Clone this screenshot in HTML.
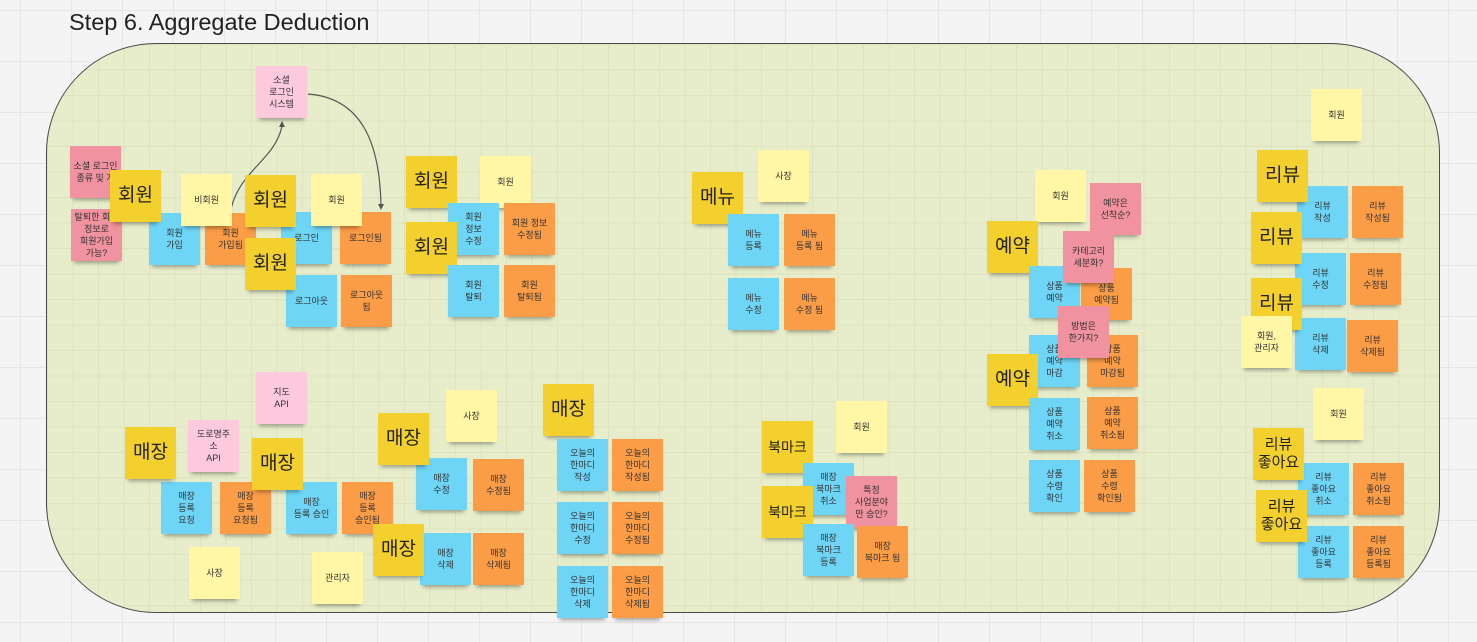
<!DOCTYPE html>
<html><head><meta charset="utf-8"><style>
body{margin:0;width:1477px;height:642px;overflow:hidden;background:#f4f4f4;
background-image:linear-gradient(#e6e6e6 1px,transparent 1px),linear-gradient(90deg,#e6e6e6 1px,transparent 1px);background-size:51px 51px;background-position:20px 10px;
font-family:"Liberation Sans","Noto Sans CJK KR",sans-serif;position:relative}
.t{position:absolute;left:69px;top:9px;font-size:23.5px;color:#222}
.c{position:absolute;left:46px;top:43px;width:1392px;height:568px;border:1.5px solid #4a4a4a;border-radius:110px;background:#e7edcb;
background-image:linear-gradient(#dce3bd 1px,transparent 1px),linear-gradient(90deg,#dce3bd 1px,transparent 1px);background-size:25.5px 25.5px}
.n{position:absolute;width:51px;height:52px;display:flex;align-items:center;justify-content:center;text-align:center;font-size:9px;line-height:12px;color:#333;box-shadow:0 5px 4px -3px rgba(0,0,0,.35);overflow:hidden}
.b{background:#6fd5f6}.o{background:#fb9c46}.y{background:#fff6a6}.p{background:#fdc9dd}.r{background:#f0929f}
.Y{background:#f4d02e;font-size:19px;line-height:22px;color:#222}
.Y.s{font-size:15px;line-height:18px}
svg{position:absolute;left:0;top:0}
</style></head><body>
<div class="t">Step 6. Aggregate Deduction</div>
<div class="c"></div>
<svg width="1477" height="642"><g fill="none" stroke="#555" stroke-width="1.2"><path d="M231 209 C240 170,275 160,282 126"/><path d="M308 94 C360 98,380 140,381 207"/></g><path d="M279 127 L282 121 L285 127Z M378 204 L381 210 L384 204Z" fill="#555"/></svg>

<div class="n r" style="left:70px;top:146px">소셜 로그인<br>종류 및 개</div>
<div class="n r" style="left:71px;top:209px">탈퇴한 회원<br>정보로<br>회원가입<br>가능?</div>
<div class="n b" style="left:149px;top:213px">회원<br>가입</div>
<div class="n o" style="left:205px;top:213px">회원<br>가입됨</div>
<div class="n Y" style="left:110px;top:170px">회원</div>
<div class="n y" style="left:181px;top:174px">비회원</div>
<div class="n p" style="left:256px;top:66px">소셜<br>로그인<br>시스템</div>
<div class="n b" style="left:281px;top:212px">로그인</div>
<div class="n o" style="left:340px;top:212px">로그인됨</div>
<div class="n Y" style="left:245px;top:175px">회원</div>
<div class="n y" style="left:311px;top:174px">회원</div>
<div class="n b" style="left:286px;top:275px">로그아웃</div>
<div class="n o" style="left:341px;top:275px">로그아웃<br>됨</div>
<div class="n Y" style="left:245px;top:238px">회원</div>

<div class="n Y" style="left:406px;top:156px">회원</div>
<div class="n y" style="left:480px;top:156px">회원</div>
<div class="n b" style="left:448px;top:203px">회원<br>정보<br>수정</div>
<div class="n o" style="left:504px;top:203px">회원 정보<br>수정됨</div>
<div class="n Y" style="left:406px;top:222px">회원</div>
<div class="n b" style="left:448px;top:265px">회원<br>탈퇴</div>
<div class="n o" style="left:504px;top:265px">회원<br>탈퇴됨</div>

<div class="n Y" style="left:692px;top:172px">메뉴</div>
<div class="n y" style="left:758px;top:150px">사장</div>
<div class="n b" style="left:728px;top:214px">메뉴<br>등록</div>
<div class="n o" style="left:784px;top:214px">메뉴<br>등록 됨</div>
<div class="n b" style="left:728px;top:278px">메뉴<br>수정</div>
<div class="n o" style="left:784px;top:278px">메뉴<br>수정 됨</div>

<div class="n y" style="left:1035px;top:170px">회원</div>
<div class="n Y" style="left:987px;top:221px">예약</div>
<div class="n b" style="left:1029px;top:266px">상품<br>예약</div>
<div class="n o" style="left:1081px;top:268px">상품<br>예약됨</div>
<div class="n r" style="left:1090px;top:183px">예약은<br>선착순?</div>
<div class="n r" style="left:1063px;top:231px">카테고리<br>세분화?</div>
<div class="n b" style="left:1029px;top:335px">상품<br>예약<br>마감</div>
<div class="n o" style="left:1087px;top:335px">상품<br>예약<br>마감됨</div>
<div class="n r" style="left:1058px;top:306px">방법은<br>한가지?</div>
<div class="n Y" style="left:987px;top:354px">예약</div>
<div class="n b" style="left:1029px;top:398px">상품<br>예약<br>취소</div>
<div class="n o" style="left:1087px;top:397px">상품<br>예약<br>취소됨</div>
<div class="n b" style="left:1029px;top:460px">상품<br>수령<br>확인</div>
<div class="n o" style="left:1084px;top:460px">상품<br>수령<br>확인됨</div>

<div class="n y" style="left:1311px;top:89px">회원</div>
<div class="n b" style="left:1297px;top:186px">리뷰<br>작성</div>
<div class="n o" style="left:1352px;top:186px">리뷰<br>작성됨</div>
<div class="n Y" style="left:1257px;top:150px">리뷰</div>
<div class="n b" style="left:1295px;top:253px">리뷰<br>수정</div>
<div class="n o" style="left:1350px;top:253px">리뷰<br>수정됨</div>
<div class="n Y" style="left:1251px;top:212px">리뷰</div>
<div class="n b" style="left:1295px;top:318px">리뷰<br>삭제</div>
<div class="n o" style="left:1347px;top:320px">리뷰<br>삭제됨</div>
<div class="n Y" style="left:1251px;top:278px">리뷰</div>
<div class="n y" style="left:1241px;top:316px">회원,<br>관리자</div>
<div class="n y" style="left:1313px;top:388px">회원</div>
<div class="n b" style="left:1298px;top:463px">리뷰<br>좋아요<br>취소</div>
<div class="n o" style="left:1353px;top:463px">리뷰<br>좋아요<br>취소됨</div>
<div class="n Y s" style="left:1253px;top:428px">리뷰<br>좋아요</div>
<div class="n b" style="left:1298px;top:526px">리뷰<br>좋아요<br>등록</div>
<div class="n o" style="left:1353px;top:526px">리뷰<br>좋아요<br>등록됨</div>
<div class="n Y s" style="left:1256px;top:490px">리뷰<br>좋아요</div>

<div class="n y" style="left:836px;top:401px">회원</div>
<div class="n Y" style="left:762px;top:421px;font-size:14px">북마크</div>
<div class="n b" style="left:803px;top:463px">매장<br>북마크<br>취소</div>
<div class="n r" style="left:846px;top:476px">특정<br>사업분야<br>만 승인?</div>
<div class="n Y" style="left:762px;top:486px;font-size:14px">북마크</div>
<div class="n b" style="left:803px;top:524px">매장<br>북마크<br>등록</div>
<div class="n o" style="left:857px;top:526px">매장<br>북마크 됨</div>

<div class="n p" style="left:256px;top:372px">지도<br>API</div>
<div class="n b" style="left:161px;top:482px">매장<br>등록<br>요청</div>
<div class="n o" style="left:220px;top:482px">매장<br>등록<br>요청됨</div>
<div class="n Y" style="left:125px;top:427px">매장</div>
<div class="n p" style="left:188px;top:420px">도로명주<br>소<br>API</div>
<div class="n b" style="left:286px;top:482px">매장<br>등록 승인</div>
<div class="n o" style="left:342px;top:482px">매장<br>등록<br>승인됨</div>
<div class="n Y" style="left:252px;top:438px">매장</div>
<div class="n y" style="left:189px;top:547px">사장</div>
<div class="n y" style="left:312px;top:552px">관리자</div>
<div class="n y" style="left:446px;top:390px">사장</div>
<div class="n b" style="left:416px;top:458px">매장<br>수정</div>
<div class="n o" style="left:473px;top:459px">매장<br>수정됨</div>
<div class="n Y" style="left:378px;top:413px">매장</div>
<div class="n b" style="left:420px;top:533px">매장<br>삭제</div>
<div class="n o" style="left:473px;top:533px">매장<br>삭제됨</div>
<div class="n Y" style="left:373px;top:524px">매장</div>
<div class="n Y" style="left:543px;top:384px">매장</div>
<div class="n b" style="left:557px;top:439px">오늘의<br>한마디<br>작성</div>
<div class="n o" style="left:612px;top:439px">오늘의<br>한마디<br>작성됨</div>
<div class="n b" style="left:557px;top:502px">오늘의<br>한마디<br>수정</div>
<div class="n o" style="left:612px;top:502px">오늘의<br>한마디<br>수정됨</div>
<div class="n b" style="left:557px;top:566px">오늘의<br>한마디<br>삭제</div>
<div class="n o" style="left:612px;top:566px">오늘의<br>한마디<br>삭제됨</div>
</body></html>
